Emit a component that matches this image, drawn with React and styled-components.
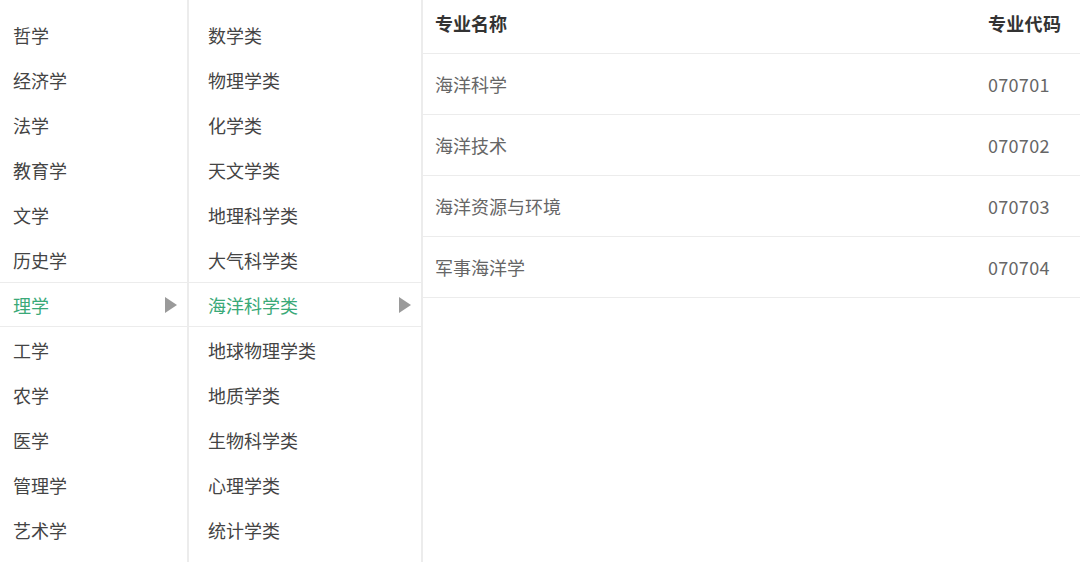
import React, { useState } from 'react';
import styled, { createGlobalStyle } from 'styled-components';

const GlobalStyle = createGlobalStyle`
    html, body {
        margin: 0;
        padding: 0;
        background: #ffffff;
        font-family: "Noto Sans CJK SC", "Noto Sans", sans-serif;
    }
`;

const Wrapper = styled.div`
    display: flex;
    width: 1080px;
    height: 562px;
    overflow: hidden;
    background: #ffffff;
`;

const Column = styled.div`
    width: ${(props) => props.width}px;
    flex-shrink: 0;
    padding-top: 12px;
    border-right: 2px solid #ececec;
    box-sizing: border-box;
`;

const Item = styled.div`
    height: 45px;
    display: flex;
    align-items: center;
    justify-content: space-between;
    padding-left: ${(props) => props.indent}px;
    padding-right: 10px;
    box-sizing: border-box;
    font-size: 18px;
    color: ${(props) => (props.active ? '#3aa978' : '#444444')};
    border-top: 1px solid ${(props) => (props.active ? '#ececec' : 'transparent')};
    border-bottom: 1px solid ${(props) => (props.active ? '#ececec' : 'transparent')};
    cursor: pointer;
`;

const Arrow = styled.span`
    width: 0;
    height: 0;
    border-top: 8px solid transparent;
    border-bottom: 8px solid transparent;
    border-left: 12px solid #9a9a9a;
`;

const Table = styled.div`
    flex: 1;
    display: flex;
    flex-direction: column;
`;

const Row = styled.div`
    display: flex;
    align-items: center;
    height: ${(props) => (props.head ? 54 : 61)}px;
    padding-left: 12px;
    padding-bottom: ${(props) => (props.head ? 7 : 0)}px;
    border-bottom: 1px solid #ececec;
    box-sizing: border-box;
    font-size: 18px;
    font-weight: ${(props) => (props.head ? 700 : 400)};
    color: ${(props) => (props.head ? '#333333' : '#666666')};
`;

const NameCell = styled.div`
    flex: 1;
`;

const CodeCell = styled.div`
    width: 92px;
    letter-spacing: 0.3px;
`;

const categories = ['哲学', '经济学', '法学', '教育学', '文学', '历史学', '理学', '工学', '农学', '医学', '管理学', '艺术学'];
const subjects = ['数学类', '物理学类', '化学类', '天文学类', '地理科学类', '大气科学类', '海洋科学类', '地球物理学类', '地质学类', '生物科学类', '心理学类', '统计学类'];
const majors = [
    { name: '海洋科学', code: '070701' },
    { name: '海洋技术', code: '070702' },
    { name: '海洋资源与环境', code: '070703' },
    { name: '军事海洋学', code: '070704' },
];

function App() {
    const [category, setCategory] = useState('理学');
    const [subject, setSubject] = useState('海洋科学类');

    return (
        <Wrapper>
            <GlobalStyle />
            <Column width={189}>
                {categories.map((c) => (
                    <Item key={c} indent={13} active={c === category} onClick={() => setCategory(c)}>
                        {c}
                        {c === category && <Arrow />}
                    </Item>
                ))}
            </Column>
            <Column width={234}>
                {subjects.map((s) => (
                    <Item key={s} indent={19} active={s === subject} onClick={() => setSubject(s)}>
                        {s}
                        {s === subject && <Arrow />}
                    </Item>
                ))}
            </Column>
            <Table>
                <Row head>
                    <NameCell>专业名称</NameCell>
                    <CodeCell>专业代码</CodeCell>
                </Row>
                {majors.map((m) => (
                    <Row key={m.code}>
                        <NameCell>{m.name}</NameCell>
                        <CodeCell>{m.code}</CodeCell>
                    </Row>
                ))}
            </Table>
        </Wrapper>
    );
}

export default App;
